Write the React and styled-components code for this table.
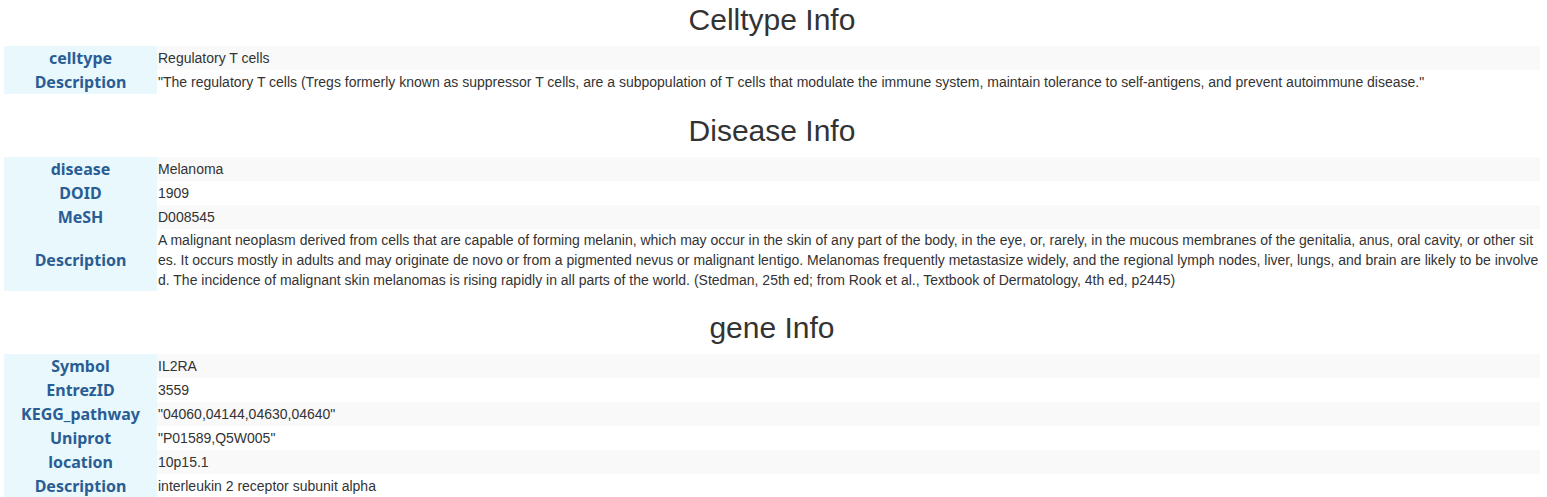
import React from 'react'
import styled, { createGlobalStyle } from 'styled-components'

const sections = [
  {
    title: 'Celltype Info',
    rows: [
      ['celltype', 'Regulatory T cells'],
      ['Description', '"The regulatory T cells (Tregs formerly known as suppressor T cells, are a subpopulation of T cells that modulate the immune system, maintain tolerance to self-antigens, and prevent autoimmune disease."'],
    ],
  },
  {
    title: 'Disease Info',
    rows: [
      ['disease', 'Melanoma'],
      ['DOID', '1909'],
      ['MeSH', 'D008545'],
      ['Description', 'A malignant neoplasm derived from cells that are capable of forming melanin, which may occur in the skin of any part of the body, in the eye, or, rarely, in the mucous membranes of the genitalia, anus, oral cavity, or other sites. It occurs mostly in adults and may originate de novo or from a pigmented nevus or malignant lentigo. Melanomas frequently metastasize widely, and the regional lymph nodes, liver, lungs, and brain are likely to be involved. The incidence of malignant skin melanomas is rising rapidly in all parts of the world. (Stedman, 25th ed; from Rook et al., Textbook of Dermatology, 4th ed, p2445)'],
    ],
  },
  {
    title: 'gene Info',
    rows: [
      ['Symbol', 'IL2RA'],
      ['EntrezID', '3559'],
      ['KEGG_pathway', '"04060,04144,04630,04640"'],
      ['Uniprot', '"P01589,Q5W005"'],
      ['location', '10p15.1'],
      ['Description', 'interleukin 2 receptor subunit alpha'],
    ],
  },
]

const App = () => {
  return (
    <>
      <GlobalStyle />
      <StyledPage>
        {sections.map((section) => (
          <StyledSection key={section.title}>
            <StyledTitle>{section.title}</StyledTitle>
            <StyledTable>
              <tbody>
                {section.rows.map(([label, value]) => (
                  <StyledRow key={label}>
                    <StyledLabel>{label}</StyledLabel>
                    <StyledValue>{value}</StyledValue>
                  </StyledRow>
                ))}
              </tbody>
            </StyledTable>
          </StyledSection>
        ))}
      </StyledPage>
    </>
  )
}

const GlobalStyle = createGlobalStyle`
  body {
    margin: 0;
    background: #fff;
    font-family: "Liberation Sans", Arial, sans-serif;
    color: #333;
  }
`;

const StyledPage = styled.div`
  padding: 3px 7px 0 4px;
`;

const StyledSection = styled.section`
  margin-bottom: 20px;
`;

const StyledTitle = styled.h2`
  margin: 0 0 10px;
  font-family: "Liberation Sans", Arial, sans-serif;
  font-size: 30px;
  font-weight: 400;
  line-height: 33px;
  text-align: center;
  color: #333;
`;

const StyledTable = styled.table`
  width: 100%;
  border-collapse: collapse;
  border-spacing: 0;
  table-layout: fixed;
`;

const StyledRow = styled.tr`
  &:nth-child(odd) td:last-child {
    background: #f9f9f9;
  }
`;

const StyledLabel = styled.td`
  width: 153px;
  padding: 1px 0;
  background: #e8f8fd;
  color: #2a5d94;
  font-family: "Noto Sans", "Open Sans", sans-serif;
  font-weight: 700;
  font-size: 16px;
  line-height: 22px;
  text-align: center;
  vertical-align: middle;
`;

const StyledValue = styled.td`
  padding: 1px 1px;
  font-size: 14px;
  line-height: 20px;
  color: #333;
  vertical-align: middle;
  word-break: break-all;
`;

export default App
